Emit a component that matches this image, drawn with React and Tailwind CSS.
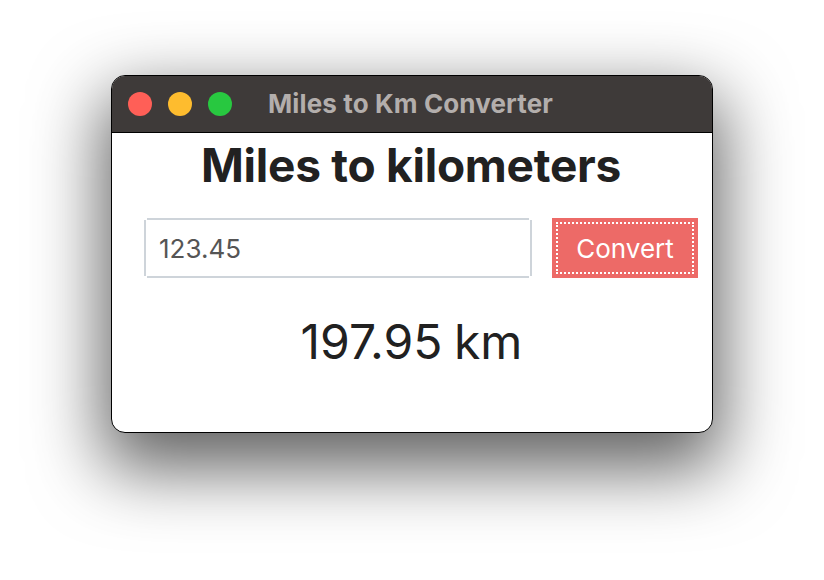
const App = () => (
  <div className="h-[580px] w-[824px] overflow-hidden bg-white pl-[111px] pt-[75px] font-['Inter',sans-serif]">
    <div className="flex h-[358px] w-[602px] flex-col overflow-hidden rounded-[14px] border border-black bg-white shadow-[0_28px_70px_8px_rgba(0,0,0,0.62)]">
      <div className="flex h-[57px] shrink-0 items-center gap-4 border-b border-black bg-[#3e3a39] pl-4">
        <span className="h-6 w-6 rounded-full bg-[#ff5f57]"></span>
        <span className="h-6 w-6 rounded-full bg-[#febc2e]"></span>
        <span className="h-6 w-6 rounded-full bg-[#28c840]"></span>
        <span className="ml-[20px] text-[26px] font-bold leading-none tracking-[0.12px] text-[#b3aeac]">Miles to Km Converter</span>
      </div>
      <h1 className="mt-[6px] pr-[2px] text-center text-[46px] font-bold leading-[52px] tracking-[-0.25px] text-[#212121]">Miles to kilometers</h1>
      <div className="ml-[32px] mt-[27px] flex gap-5">
        <div className="flex h-[60px] w-[388px]">
          <span className="my-[2px] w-[2px] bg-[#ced4da]"></span>
          <div className="ml-px flex flex-1 items-center border-y-2 border-[#ced4da] pl-3 text-[26px] text-[#555555]">123.45</div>
          <span className="my-[2px] ml-px w-[2px] bg-[#ced4da]"></span>
        </div>
        <button className="h-[60px] w-[146px] bg-[#ed6a67] p-1 text-[26px] text-white">
          <span className="flex h-full w-full items-center justify-center border-2 border-dotted border-white">Convert</span>
        </button>
      </div>
      <div className="mt-[36px] pr-[1px] text-center text-[48px] leading-[56px] text-[#212121] [word-spacing:-2px]">197.95 km</div>
    </div>
  </div>
);

export default App;
